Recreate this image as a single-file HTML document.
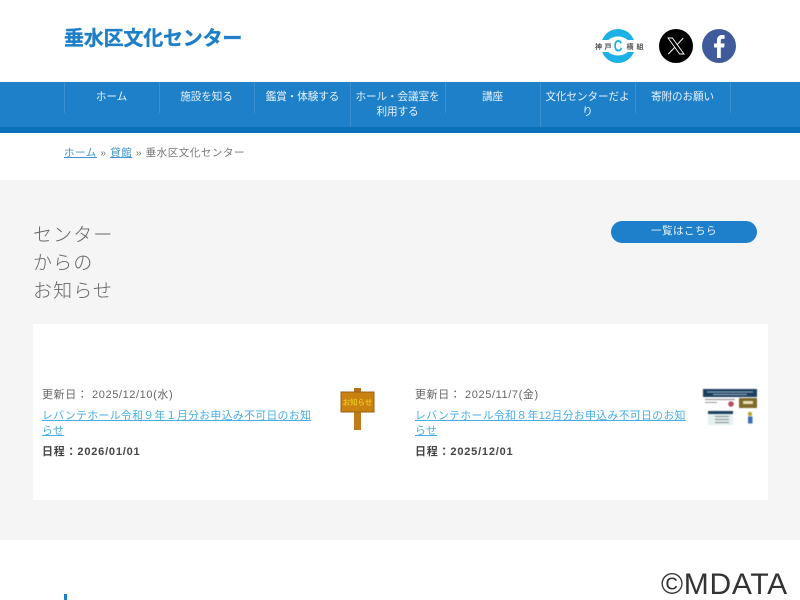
<!DOCTYPE html>
<html lang="ja">
<head>
<meta charset="utf-8">
<title>垂水区文化センター</title>
<style>
html,body{margin:0;padding:0;width:800px;height:600px;overflow:hidden;background:#fff;}
body{position:relative;font-family:"Liberation Sans","Noto Sans CJK JP",sans-serif;color:#555;}
.a{position:absolute;white-space:nowrap;}
a{color:inherit;}
.sep{position:absolute;top:82px;width:1px;height:31px;background:rgba(255,255,255,.13);}
.nav{position:absolute;top:90px;width:95px;text-align:center;color:#e6f2fa;font-size:10.6px;letter-spacing:-.1px;line-height:15px;}
.link{color:#45ade6;font-size:10.800px;letter-spacing:.4px;line-height:15px;position:absolute;width:273px;}
.date{font-size:11px;letter-spacing:.6px;color:#666;line-height:14px;}
.sch{font-size:11px;letter-spacing:.8px;font-weight:bold;color:#444;line-height:14px;}
</style>
</head>
<body>
<div class="a" style="left:64px;top:25px;font-size:20px;font-weight:bold;color:#1e7fc9;line-height:28px;letter-spacing:-.2px;-webkit-text-stroke:.35px #1e7fc9;">垂水区文化センター</div>

<svg class="a" style="left:592px;top:26px;" width="56" height="40" viewBox="0 0 56 40">
<circle cx="26" cy="20" r="17" fill="#1cb1e4"/>
<ellipse cx="26" cy="20" rx="12.500" ry="9.500" fill="#fff"/>
<rect x="2" y="14" width="50" height="12" fill="#fff"/>
<text transform="translate(26 25.500) scale(.72 1)" text-anchor="middle" font-family="Liberation Sans" font-size="16.500" font-weight="bold" fill="#1cb1e4">C</text>
<text x="3" y="23" font-family="Noto Sans CJK JP" font-size="7" font-weight="bold" fill="#555">神</text>
<text x="12.500" y="23" font-family="Noto Sans CJK JP" font-size="7" font-weight="bold" fill="#555">戸</text>
<text x="34.500" y="23" font-family="Noto Sans CJK JP" font-size="7" font-weight="bold" fill="#555">横</text>
<text x="44.500" y="23" font-family="Noto Sans CJK JP" font-size="7" font-weight="bold" fill="#555">組</text>
</svg>

<svg class="a" style="left:659px;top:29px;" width="34" height="34" viewBox="0 0 34 34">
<circle cx="17" cy="17" r="17" fill="#000"/>
<path d="M9 9h4.400L25 25h-4.400z" fill="none" stroke="#fff" stroke-width=".9"/>
<path d="M24.300 9L18 15.800M15.600 18.500L9.300 25" fill="none" stroke="#fff" stroke-width="1"/>
</svg>

<svg class="a" style="left:702px;top:29px;" width="34" height="34" viewBox="0 0 34 34">
<circle cx="17" cy="17" r="17" fill="#3f5b9b"/>
<path d="M15 29V18.500h-3v-4h3v-3c0-3.500 1.800-5.500 5-5.500 1.300 0 2.200.1 2.600.2v3.600h-1.800c-1.700 0-2 .8-2 2v2.700h3.800l-.5 4h-3.300V29z" fill="#fff"/>
</svg>

<div class="a" style="left:0;top:82px;width:800px;height:45px;background:#1f80ca;"></div>
<div class="a" style="left:0;top:127px;width:800px;height:6px;background:#0b6fba;"></div>
<div class="sep" style="left:64px;"></div>
<div class="sep" style="left:159px;"></div>
<div class="sep" style="left:254px;"></div>
<div class="sep" style="left:350px;height:45px;"></div>
<div class="sep" style="left:445px;"></div>
<div class="sep" style="left:540px;height:45px;"></div>
<div class="sep" style="left:635px;"></div>
<div class="sep" style="left:730px;"></div>
<div class="nav" style="left:64px;">ホーム</div>
<div class="nav" style="left:159px;">施設を知る</div>
<div class="nav" style="left:255px;">鑑賞・体験する</div>
<div class="nav" style="left:350px;">ホール・会議室を<br>利用する</div>
<div class="nav" style="left:445px;">講座</div>
<div class="nav" style="left:540px;">文化センターだよ<br>り</div>
<div class="nav" style="left:635px;">寄附のお願い</div>

<div class="a" style="left:64px;top:146px;font-size:10.500px;letter-spacing:.55px;line-height:15px;color:#777;"><a href="#" style="color:#3e94cf;">ホーム</a> » <a href="#" style="color:#3e94cf;">貸館</a> » 垂水区文化センター</div>

<div class="a" style="left:0;top:180px;width:800px;height:360px;background:#f5f5f5;"></div>

<div class="a" style="left:33px;top:222px;font-size:19px;letter-spacing:1.100px;line-height:28px;font-weight:300;color:#666;">センター<br>からの<br>お知らせ</div>

<div class="a" style="left:611px;top:221px;width:146px;height:22px;border-radius:11px;background:#1e80ca;color:#e8f3fb;font-size:10.500px;letter-spacing:.5px;line-height:20px;text-align:center;">一覧はこちら</div>

<div class="a" style="left:33px;top:324px;width:735px;height:176px;background:#fff;"></div>

<div class="a date" style="left:42px;top:388px;">更新日： 2025/12/10(水)</div>
<div class="link" style="left:42px;top:409px;"><a href="#">レバンテホール令和９年１月分お申込み不可日のお知らせ</a></div>
<div class="a sch" style="left:42px;top:445px;">日程：2026/01/01</div>

<svg class="a" style="left:340px;top:388px;" width="35" height="42" viewBox="0 0 35 42">
<rect x="14" y="0" width="7" height="5" fill="#b8701c"/>
<rect x="14" y="22" width="7" height="20" fill="#c07a18"/>
<rect x="1" y="4" width="33" height="20" fill="#c9810f" stroke="#96601a"/>
<text x="17.500" y="17" text-anchor="middle" font-family="Noto Sans CJK JP" font-size="7.500" font-weight="bold" fill="#e8c020">お知らせ</text>
</svg>

<div class="a date" style="left:415px;top:388px;">更新日： 2025/11/7(金)</div>
<div class="link" style="left:415px;top:409px;"><a href="#">レバンテホール令和８年12月分お申込み不可日のお知らせ</a></div>
<div class="a sch" style="left:415px;top:445px;">日程：2025/12/01</div>

<svg class="a" style="left:703px;top:389px;filter:blur(.4px);" width="55" height="38" viewBox="0 0 55 38">
<rect width="55" height="38" fill="#fff"/>
<rect x="0" y="0" width="54" height="8" fill="#1d3f5e"/>
<rect x="4" y="2.500" width="46" height="1" fill="#9fb6c6"/>
<rect x="10" y="5" width="34" height="1" fill="#9fb6c6"/>
<rect x="2" y="10" width="30" height="1" fill="#888"/>
<rect x="2" y="13" width="12" height="1" fill="#999"/>
<circle cx="28" cy="15" r="2.800" fill="#b05060"/>
<rect x="36" y="9" width="18" height="10" fill="#7d6a2a"/>
<rect x="40" y="12" width="10" height="3" fill="#e8e0b8"/>
<rect x="5" y="22" width="25" height="3" fill="#1d3f5e"/>
<rect x="5" y="25" width="25" height="11" fill="#e4f1f1"/>
<rect x="12" y="27" width="14" height="1" fill="#888"/>
<rect x="12" y="30" width="14" height="1" fill="#888"/>
<rect x="12" y="33" width="14" height="1" fill="#888"/>
<circle cx="47" cy="25" r="2.200" fill="#b9a530"/>
<rect x="45" y="27.500" width="4.500" height="7" fill="#3a6fb0"/>
</svg>

<div class="a" style="left:661px;top:568px;font-size:30px;line-height:34px;color:#333;letter-spacing:.7px;">©MDATA</div>
<div class="a" style="left:64px;top:594px;width:3px;height:6px;background:#1e80ca;"></div>
</body>
</html>
